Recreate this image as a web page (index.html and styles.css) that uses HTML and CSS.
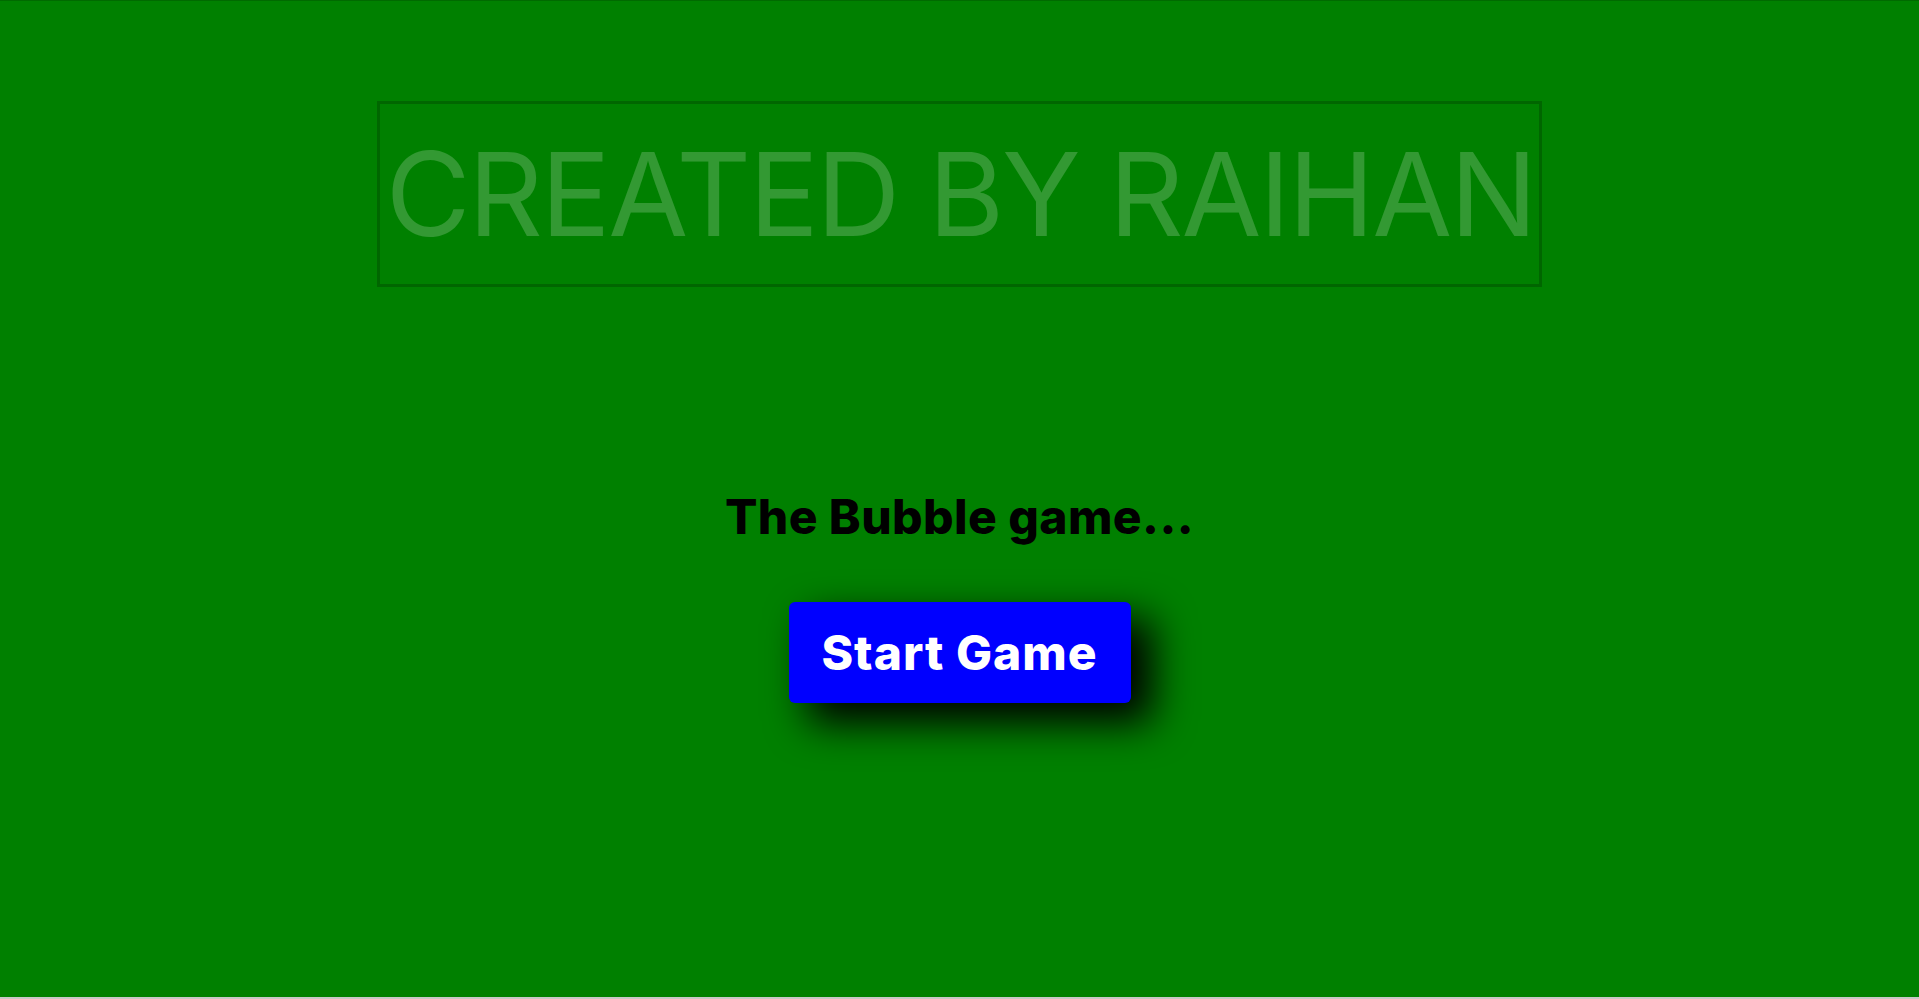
FILE: index.html
```html
<!DOCTYPE html>
<html lang="en">
<head>
<meta charset="UTF-8">
<title>Bubble Game</title>
<link rel="stylesheet" href="styles.css">
</head>
<body>
<main class="page">
  <header class="banner">
    <h2 class="banner-text">CREATED BY RAIHAN</h2>
  </header>
  <section class="game">
    <h1 class="game-title">The Bubble game...</h1>
    <button class="start-btn" type="button">Start Game</button>
  </section>
</main>
</body>
</html>
```
FILE: styles.css
```css
html, body {
  margin: 0;
  padding: 0;
  background: #c8c8c8;
}
body {
  font-family: Inter, "Open Sans", sans-serif;
}
.page {
  height: 996px;
  background: #008000;
  border-top: 1px solid #006a00;
  display: flex;
  flex-direction: column;
  align-items: center;
  box-sizing: content-box;
}
.banner {
  margin-top: 100px;
  border: 3px solid rgba(0, 0, 0, 0.2);
}
.banner-text {
  margin: 0;
  font-size: 116px;
  font-weight: 400;
  line-height: 180px;
  height: 180px;
  padding: 0 4px 0 6px;
  letter-spacing: -2.2px;
  color: rgba(255, 255, 255, 0.2);
  white-space: nowrap;
}
.game {
  margin-top: 194px;
  display: flex;
  flex-direction: column;
  align-items: center;
}
.game-title {
  margin: 0;
  font-size: 48px;
  font-weight: 800;
  letter-spacing: 0.4px;
  line-height: 72px;
  color: #000;
}
.start-btn {
  margin-top: 49px;
  width: 342px;
  height: 101px;
  border: none;
  border-radius: 6px;
  background: #0000ff;
  color: #fff;
  font-family: Inter, sans-serif;
  font-size: 48px;
  font-weight: 800;
  letter-spacing: 1px;
  box-shadow: 20px 18px 40px 2px #000;
  cursor: pointer;
}
```
